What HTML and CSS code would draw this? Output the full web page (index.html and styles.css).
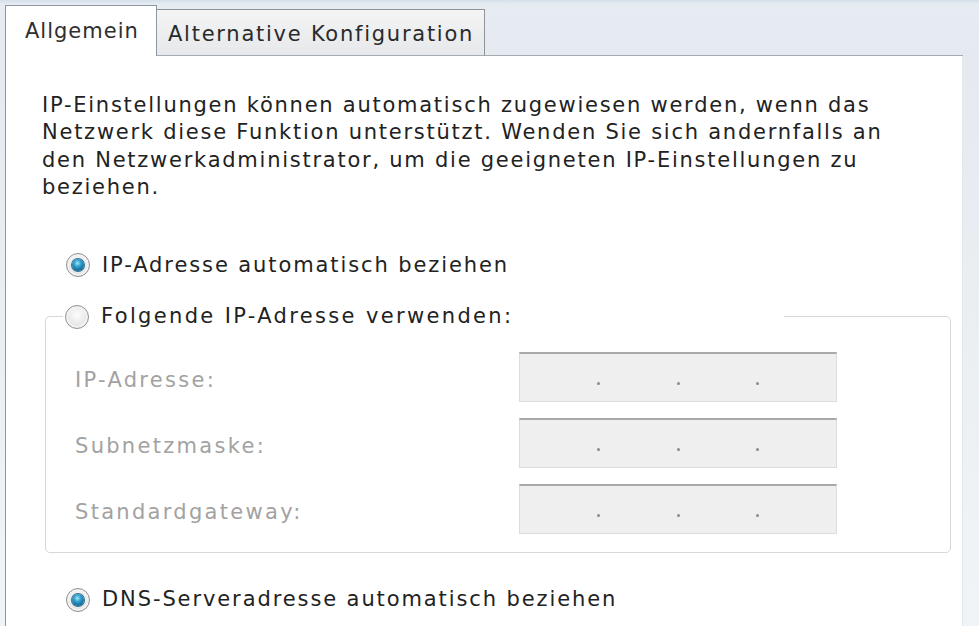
FILE: index.html
```html
<!DOCTYPE html>
<html lang="de">
<head>
<meta charset="utf-8">
<title>Eigenschaften von Internetprotokoll Version 4</title>
<link rel="stylesheet" href="styles.css">
</head>
<body>
<div class="dialog">
  <div class="tabs">
    <div class="tab tab-active">Allgemein</div>
    <div class="tab tab-inactive">Alternative Konfiguration</div>
    <div class="tab-fill"></div>
  </div>
  <div class="panel">
    <p class="intro">IP-Einstellungen können automatisch zugewiesen werden, wenn das<br>Netzwerk diese Funktion unterstützt. Wenden Sie sich andernfalls an<br>den Netzwerkadministrator, um die geeigneten IP-Einstellungen zu<br>beziehen.</p>

    <div class="radio-row row-auto">
      <span class="radio checked"></span>
      <span class="radio-text">IP-Adresse automatisch beziehen</span>
    </div>

    <fieldset class="group">
      <legend class="group-legend">
        <span class="radio"></span>
        <span class="radio-text legend-text">Folgende IP-Adresse verwenden:</span>
      </legend>
      <div class="field-row">
        <span class="field-label">IP-Adresse:</span>
        <div class="ipbox"><span class="seg"></span><span class="dot"></span><span class="seg"></span><span class="dot"></span><span class="seg"></span><span class="dot"></span><span class="seg"></span></div>
      </div>
      <div class="field-row">
        <span class="field-label">Subnetzmaske:</span>
        <div class="ipbox"><span class="seg"></span><span class="dot"></span><span class="seg"></span><span class="dot"></span><span class="seg"></span><span class="dot"></span><span class="seg"></span></div>
      </div>
      <div class="field-row">
        <span class="field-label">Standardgateway:</span>
        <div class="ipbox"><span class="seg"></span><span class="dot"></span><span class="seg"></span><span class="dot"></span><span class="seg"></span><span class="dot"></span><span class="seg"></span></div>
      </div>
    </fieldset>

    <div class="radio-row row-dns">
      <span class="radio checked"></span>
      <span class="radio-text dns-text">DNS-Serveradresse automatisch beziehen</span>
    </div>
  </div>
</div>
</body>
</html>
```
FILE: styles.css
```css
html, body {
  margin: 0;
  padding: 0;
}
body {
  width: 979px;
  height: 626px;
  overflow: hidden;
  background: linear-gradient(#d3dfea 0, #e6ecf2 4px, #e4eaf0 60px, #f1f4f7 100%);
  font-family: "DejaVu Sans", "Open Sans", sans-serif;
  font-size: 21px;
  color: #222222;
}
.dialog {
  padding: 5px 0 0 5px;
  width: 958px;
  height: 621px;
  display: flex;
  flex-direction: column;
}
.tabs {
  display: flex;
  align-items: flex-end;
  height: 51px;
}
.tab {
  box-sizing: border-box;
  white-space: nowrap;
}
.tab-active {
  width: 152px;
  height: 51px;
  border: 1px solid #8c97a3;
  border-bottom: none;
  background: #ffffff;
  padding: 10px 0 0 19px;
  line-height: 30px;
  letter-spacing: 1px;
  color: #2e2e2e;
}
.tab-inactive {
  width: 328px;
  height: 47px;
  border: 1px solid #8d939b;
  border-left: none;
  border-bottom-color: #a3abb4;
  background: linear-gradient(#f4f4f4, #e6e8eb);
  padding: 9px 0 0 11px;
  line-height: 30px;
  letter-spacing: 1.75px;
  color: #2a2a2a;
}
.tab-fill {
  flex: 1;
  height: 1px;
  background: #a3abb4;
}
.panel {
  flex: 1;
  background: #ffffff;
  border-left: 1px solid #8c97a3;
  border-right: 1px solid #e3e8ed;
  padding: 36px 0 0 36px;
}
.intro {
  margin: 0;
  line-height: 27.4px;
  letter-spacing: 1.75px;
  white-space: nowrap;
}
.radio-row {
  display: flex;
  align-items: center;
  line-height: 27.4px;
  white-space: nowrap;
}
.row-auto {
  margin: 50px 0 0 24px;
}
.row-dns {
  margin: 33px 0 0 24px;
}
.radio {
  box-sizing: border-box;
  width: 24px;
  height: 24px;
  flex: none;
  border-radius: 50%;
  border: 1px solid #8e9296;
  background: radial-gradient(circle at 50% 40%, #fdfdfd 0, #e9e9e9 55%, #c9cbcd 100%);
  box-shadow: inset 0 0 0 2px #f2f2f2;
  display: flex;
  align-items: center;
  justify-content: center;
}
.radio.checked::after {
  content: "";
  width: 12px;
  height: 12px;
  border-radius: 50%;
  background: radial-gradient(circle at 45% 35%, #9ee8fb 0, #2f9ccb 35%, #0d5f8c 80%, #0a4a70 100%);
  box-shadow: 0 0 0 1px #2b6f94;
}
.radio-text {
  margin-left: 12px;
  letter-spacing: 1.9px;
}
.legend-text {
  letter-spacing: 2.35px;
}
.dns-text {
  letter-spacing: 1.9px;
}
.group {
  box-sizing: border-box;
  width: 906px;
  margin: 24px 0 0 3px;
  padding: 22px 0 18px 29px;
  border: 1px solid #d3d8dd;
  border-radius: 5px;
  min-width: 0;
}
.group-legend {
  box-sizing: border-box;
  width: 721px;
  margin-left: -12px;
  padding: 0 0 0 2px;
  display: flex;
  align-items: center;
  line-height: 27.4px;
  white-space: nowrap;
}
.field-row {
  display: flex;
  align-items: center;
  height: 50px;
}
.field-row + .field-row {
  margin-top: 16px;
}
.field-label {
  width: 444px;
  color: #a2a2a2;
  letter-spacing: 2.3px;
  padding-top: 6px;
}
.ipbox {
  box-sizing: border-box;
  width: 318px;
  height: 50px;
  background: #efefef;
  border: 1px solid #dcdcdc;
  border-top: 2px solid #a9a9a9;
  display: flex;
  align-items: flex-end;
  padding-bottom: 16px;
}
.seg {
  flex: 1;
}
.dot {
  width: 3px;
  height: 3px;
  border-radius: 50%;
  background: #8a8a8a;
}
```
